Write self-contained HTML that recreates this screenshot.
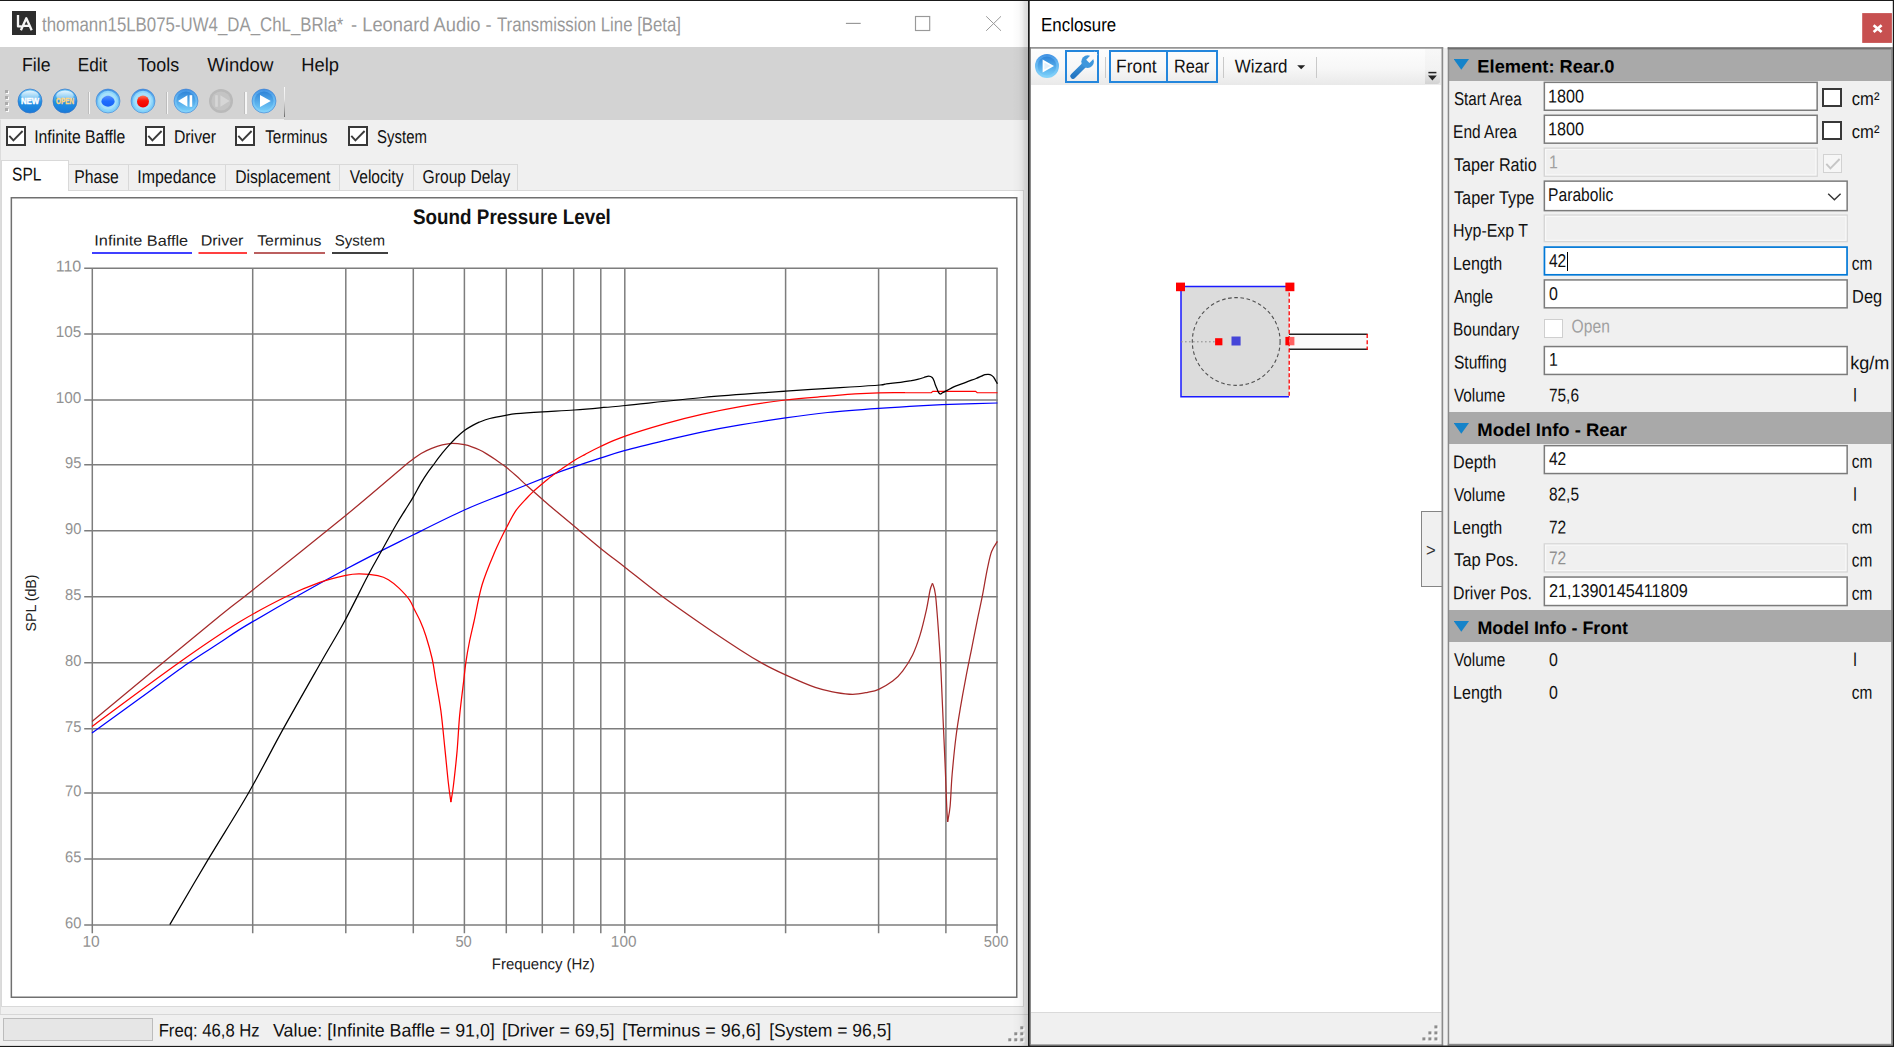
<!DOCTYPE html>
<html><head><meta charset="utf-8"><title>Leonard Audio - Transmission Line</title>
<style>
*{box-sizing:border-box;margin:0;padding:0}
html,body{width:1894px;height:1047px;overflow:hidden;background:#f0f0f0;font-family:"Liberation Sans",sans-serif}
.a{position:absolute}
.t{position:absolute;left:0;top:0;white-space:nowrap;line-height:1;transform-origin:0 0;font-family:"Liberation Sans",sans-serif}
.cb{position:absolute;width:19.6px;height:19.6px;border:2px solid #383838;background:#fff}
.tab{position:absolute;top:164px;height:26.4px;background:#f0f0f0;border:1px solid #d9d9d9;border-bottom:none}
.inp{position:absolute;background:#fff;border:1.5px solid #6a6a6a}
.dis{position:absolute;background:#f0f0f0;border:1.5px solid #d9d9d9;box-shadow:inset 0 0 0 1.2px #f7f7f7}
.hdr{position:absolute;left:1449px;width:443px;background:#a9a9a9}
</style></head><body>
<!-- ============ MAIN WINDOW ============ -->
<div class="a" style="left:0;top:0;width:1028px;height:47px;background:#fff"></div>
<div class="a" style="left:0;top:47px;width:1028px;height:72.8px;background:#d3d3d3"></div>
<div class="a" style="left:0;top:118.5px;width:283.6px;height:1.4px;background:#efefef;border-radius:0 0 0 3px"></div>
<!-- tab page -->
<div class="a" style="left:1px;top:190px;width:1023px;height:816.5px;background:#fff;border:1px solid #d9d9d9"></div>
<div class="tab" style="left:68px;width:61px"></div>
<div class="tab" style="left:128px;width:98px"></div>
<div class="tab" style="left:225px;width:115px"></div>
<div class="tab" style="left:339px;width:75px"></div>
<div class="tab" style="left:413px;width:105px"></div>
<div class="a" style="left:1px;top:160px;width:68px;height:31.4px;background:#fff;border:1px solid #d9d9d9;border-bottom:none"></div>
<div class="a" style="left:0;top:120px;width:1px;height:894px;background:#dcdcdc"></div>
<!-- chart panel -->
<svg class="a" style="left:0;top:190px" width="1028" height="820" viewBox="0 190 1028 820"><rect x="11.35" y="197.75" width="1005.4" height="799.5" fill="#fff" stroke="#707070" stroke-width="1.5"/></svg>
<svg style="position:absolute;left:0;top:0" width="1028" height="1010" viewBox="0 0 1028 1010"><g stroke="#7d7d7d" stroke-width="1.5" fill="none"><line x1="92.30" y1="268.2" x2="92.30" y2="933.2"/><line x1="252.70" y1="268.2" x2="252.70" y2="933.2"/><line x1="345.80" y1="268.2" x2="345.80" y2="933.2"/><line x1="413.30" y1="268.2" x2="413.30" y2="933.2"/><line x1="464.40" y1="268.2" x2="464.40" y2="933.2"/><line x1="506.30" y1="268.2" x2="506.30" y2="933.2"/><line x1="542.30" y1="268.2" x2="542.30" y2="933.2"/><line x1="573.70" y1="268.2" x2="573.70" y2="933.2"/><line x1="600.80" y1="268.2" x2="600.80" y2="933.2"/><line x1="624.80" y1="268.2" x2="624.80" y2="933.2"/><line x1="785.60" y1="268.2" x2="785.60" y2="933.2"/><line x1="878.60" y1="268.2" x2="878.60" y2="933.2"/><line x1="945.90" y1="268.2" x2="945.90" y2="933.2"/><line x1="997.00" y1="268.2" x2="997.00" y2="933.2"/><line x1="84.2" y1="268.20" x2="997.7" y2="268.20"/><line x1="84.2" y1="333.90" x2="997.7" y2="333.90"/><line x1="84.2" y1="399.90" x2="997.7" y2="399.90"/><line x1="84.2" y1="464.80" x2="997.7" y2="464.80"/><line x1="84.2" y1="530.70" x2="997.7" y2="530.70"/><line x1="84.2" y1="596.80" x2="997.7" y2="596.80"/><line x1="84.2" y1="662.70" x2="997.7" y2="662.70"/><line x1="84.2" y1="728.80" x2="997.7" y2="728.80"/><line x1="84.2" y1="793.00" x2="997.7" y2="793.00"/><line x1="84.2" y1="859.10" x2="997.7" y2="859.10"/><line x1="84.2" y1="925.00" x2="997.7" y2="925.00"/></g><path d="M92.0 732.9 C100.0 727.1 124.1 709.8 140.0 698.3 C155.9 686.8 174.1 673.1 187.4 663.8 C200.7 654.5 209.2 649.6 220.0 642.6 C230.8 635.6 231.4 634.1 252.3 621.9 C273.2 609.7 318.9 583.8 345.7 569.3 C372.5 554.8 393.6 544.7 413.4 534.8 C433.2 524.9 449.0 516.9 464.4 510.0 C479.8 503.1 490.8 499.2 505.6 493.3 C520.4 487.4 541.6 478.8 553.0 474.4 C564.4 470.0 566.0 469.6 574.0 466.9 C582.0 464.1 592.5 460.6 601.0 457.9 C609.5 455.1 614.5 453.3 625.2 450.4 C635.9 447.5 652.5 443.5 665.4 440.4 C678.3 437.3 690.3 434.5 702.8 431.9 C715.3 429.3 726.5 427.2 740.3 424.9 C754.1 422.6 770.9 420.0 785.5 417.9 C800.1 415.8 812.2 414.1 827.7 412.5 C843.2 410.9 866.2 409.2 878.7 408.3 C891.2 407.4 894.8 407.4 903.0 406.9 C911.2 406.4 918.8 405.9 928.0 405.4 C937.2 404.9 946.4 404.5 958.0 404.1 C969.6 403.7 990.9 403.2 997.5 403.0" stroke="#0000ff" stroke-width="1.25" fill="none" stroke-linejoin="round"/><path d="M92.0 726.4 C106.7 715.7 155.3 679.4 179.9 662.0 C204.5 644.6 221.9 632.8 239.8 621.8 C257.7 610.8 274.0 602.6 287.3 596.0 C300.6 589.4 310.1 585.8 319.8 582.3 C329.5 578.8 339.1 576.7 345.7 575.3 C352.3 573.9 354.3 573.7 359.7 573.8 C365.1 573.9 373.0 574.7 377.8 575.7 C382.6 576.7 384.9 577.6 388.4 579.7 C391.9 581.8 395.5 584.8 399.0 588.1 C402.5 591.5 406.9 596.1 409.5 599.8 C412.1 603.5 413.0 606.8 414.8 610.3 C416.6 613.8 418.2 616.5 420.1 620.8 C422.0 625.1 423.9 629.7 425.9 636.0 C427.9 642.3 430.4 651.0 432.1 658.5 C433.8 666.0 434.4 672.2 435.9 680.9 C437.4 689.6 439.4 700.1 440.9 710.9 C442.3 721.7 443.4 733.8 444.6 745.9 C445.9 758.0 447.3 773.9 448.4 783.3 C449.4 792.7 450.5 799.0 450.9 802.1" stroke="#ff0000" stroke-width="1.25" fill="none" stroke-linejoin="round"/><path d="M450.9 802.1 C451.3 799.4 452.4 794.3 453.4 785.8 C454.4 777.3 456.1 762.5 457.1 750.9 C458.1 739.2 458.6 727.1 459.6 715.9 C460.7 704.6 462.3 692.3 463.4 683.4 C464.4 674.5 464.9 669.3 465.9 662.2 C466.9 655.1 468.2 647.9 469.6 641.0 C471.0 634.1 472.0 630.4 474.1 621.0 C476.2 611.6 478.7 596.2 482.1 584.8 C485.5 573.3 490.5 561.9 494.6 552.3 C498.7 542.7 503.0 534.3 506.6 527.3 C510.2 520.3 512.9 515.0 516.2 510.2 C519.6 505.4 523.7 501.4 526.7 498.2 C529.7 495.0 531.5 493.3 534.1 490.8 C536.8 488.3 539.4 486.0 542.6 483.4 C545.8 480.8 549.6 477.6 553.1 475.0 C556.6 472.4 560.2 470.0 563.7 467.6 C567.2 465.2 570.7 462.7 574.2 460.5 C577.7 458.3 580.3 457.0 584.8 454.6 C589.3 452.2 594.3 449.3 601.0 446.2 C607.7 443.1 614.5 439.9 625.2 436.2 C635.9 432.4 652.5 427.4 665.4 423.7 C678.3 420.0 690.3 417.0 702.8 414.2 C715.3 411.4 726.5 409.1 740.3 406.7 C754.1 404.3 770.9 401.8 785.5 400.0 C800.1 398.2 816.1 397.2 827.7 396.2 C839.3 395.2 846.5 394.5 855.0 393.9 C863.5 393.3 870.4 393.0 878.7 392.8 C887.0 392.6 900.6 392.7 905.0 392.7" stroke="#ff0000" stroke-width="1.25" fill="none" stroke-linejoin="round"/><path d="M905.0 392.7 L931.3 392.7 L932.8 391.3 L975.6 391.3 L977.2 392.7 L997.5 392.7" stroke="#ff0000" stroke-width="1.15" fill="none"/><path d="M92.0 721.4 C112.3 704.7 186.8 642.9 213.6 621.0 C240.4 599.1 230.8 607.6 252.8 590.0 C274.8 572.4 321.2 535.5 345.7 515.5 C370.2 495.4 388.8 479.1 400.0 469.7 C411.2 460.3 409.7 461.8 413.2 459.1 C416.7 456.4 418.0 455.3 421.1 453.5 C424.2 451.7 428.2 449.8 431.7 448.4 C435.2 447.0 438.7 445.8 442.2 444.9 C445.7 444.0 449.1 443.3 452.8 443.3 C456.5 443.3 461.2 444.1 464.4 444.7 C467.6 445.3 469.3 445.9 471.8 446.8 C474.3 447.7 476.7 448.6 479.2 449.8 C481.7 451.0 484.0 452.3 486.6 453.9 C489.2 455.5 491.8 457.1 495.0 459.3 C498.2 461.5 502.1 464.1 505.6 466.8 C509.1 469.6 512.7 472.7 516.2 475.8 C519.7 478.9 522.3 481.6 526.7 485.5 C531.1 489.4 538.2 495.6 542.6 499.5 C547.0 503.4 547.8 504.2 553.0 508.6 C558.2 513.0 566.0 519.4 574.0 526.1 C582.0 532.8 592.5 541.8 601.0 548.7 C609.5 555.6 615.3 559.7 625.2 567.4 C635.1 575.1 647.5 585.3 660.4 594.9 C673.3 604.5 689.5 615.7 702.8 624.9 C716.1 634.1 730.3 643.4 740.3 649.9 C750.3 656.4 755.3 659.4 762.8 663.6 C770.3 667.8 776.8 670.9 785.5 674.9 C794.2 678.9 806.9 684.5 815.2 687.4 C823.5 690.3 829.0 691.1 835.2 692.3 C841.5 693.4 847.3 694.3 852.7 694.3 C858.1 694.3 863.4 693.1 867.7 692.3 C872.0 691.5 874.5 691.3 878.7 689.4 C882.9 687.5 888.7 684.1 892.7 681.1 C896.7 678.1 899.3 675.5 902.6 671.1 C905.9 666.7 909.7 660.9 912.6 654.9 C915.5 648.9 917.8 642.4 920.1 634.9 C922.4 627.4 924.7 617.4 926.4 609.9 C928.1 602.4 929.1 594.4 930.1 590.0 C931.1 585.6 932.1 584.4 932.5 583.3" stroke="#a52a2a" stroke-width="1.25" fill="none" stroke-linejoin="round"/><path d="M932.5 583.3 C933.0 585.2 934.5 586.5 935.5 595.0 C936.5 603.5 937.8 621.7 938.7 634.5 C939.6 647.3 940.3 657.9 941.0 671.7 C941.7 685.5 942.3 701.3 943.0 717.5 C943.7 733.7 944.7 754.2 945.3 769.0 C945.9 783.8 946.3 797.4 946.7 806.2 C947.1 815.0 947.5 819.4 947.6 822.0" stroke="#a52a2a" stroke-width="1.25" fill="none" stroke-linejoin="round"/><path d="M947.6 822.0 C948.0 819.4 949.4 814.1 950.1 806.2 C950.9 798.3 951.1 786.2 952.1 774.8 C953.1 763.3 954.5 748.5 955.9 737.5 C957.2 726.5 958.5 718.9 960.2 708.9 C961.9 698.9 964.0 687.4 965.9 677.4 C967.8 667.4 969.7 658.3 971.6 648.8 C973.5 639.3 975.5 628.9 977.3 620.2 C979.1 611.5 980.5 605.3 982.2 596.7 C983.9 588.1 985.8 576.1 987.4 568.6 C989.0 561.1 989.9 556.0 991.6 551.5 C993.3 547.0 996.4 543.1 997.4 541.4" stroke="#a52a2a" stroke-width="1.25" fill="none" stroke-linejoin="round"/><path d="M169.8 924.6 C176.2 913.6 195.4 880.8 208.5 858.9 C221.6 837.0 236.0 814.8 248.5 793.0 C261.0 771.2 271.4 750.2 283.5 728.4 C295.6 706.6 310.8 680.1 321.0 662.2 C331.2 644.3 336.8 635.6 344.7 621.0 C352.6 606.4 362.1 586.7 368.4 574.8 C374.6 562.9 377.6 558.1 382.2 549.8 C386.8 541.5 392.1 531.7 396.0 525.0 C399.9 518.3 402.4 514.5 405.3 509.8 C408.2 505.2 410.6 501.6 413.2 497.1 C415.8 492.6 418.7 486.9 421.1 482.9 C423.5 478.9 425.2 476.2 427.5 472.9 C429.8 469.6 432.4 466.3 434.8 463.0 C437.2 459.7 439.7 456.3 442.2 453.2 C444.7 450.1 447.1 447.3 449.6 444.6 C452.1 441.9 454.5 439.3 457.0 437.0 C459.5 434.7 461.9 432.5 464.4 430.6 C466.9 428.8 469.3 427.3 471.8 425.9 C474.3 424.5 476.2 423.4 479.2 422.2 C482.2 421.0 485.4 419.6 489.8 418.5 C494.2 417.4 501.2 416.1 505.6 415.3 C510.0 414.5 510.0 414.3 516.2 413.7 C522.4 413.1 532.9 412.4 542.6 411.8 C552.3 411.2 564.6 410.7 574.2 410.0 C583.8 409.3 591.5 408.6 600.0 407.8 C608.5 407.1 608.1 407.2 625.2 405.5 C642.3 403.8 676.1 399.9 702.8 397.5 C729.5 395.1 766.0 392.6 785.5 391.2 C805.0 389.8 809.2 389.6 820.0 388.9 C830.8 388.2 840.0 387.6 850.0 387.0 C860.0 386.4 874.0 385.5 880.0 385.0 C886.0 384.5 882.8 384.3 886.2 383.9 C889.6 383.4 896.4 382.9 900.6 382.3 C904.8 381.8 908.6 381.1 911.6 380.6 C914.6 380.1 916.4 379.6 918.4 379.1 C920.4 378.6 922.2 378.0 923.9 377.5 C925.6 377.0 927.3 376.1 928.7 376.1 C930.1 376.1 931.3 376.6 932.2 377.5 C933.1 378.4 933.7 380.1 934.2 381.3 C934.7 382.6 934.9 383.8 935.4 385.0 C935.9 386.2 936.5 387.6 937.0 388.8 C937.5 390.0 937.9 391.4 938.5 392.3 C939.1 393.2 939.7 393.9 940.4 394.0 C941.1 394.1 941.5 393.3 942.5 392.8 C943.5 392.3 944.7 391.7 946.2 390.9 C947.7 390.1 949.9 388.9 951.4 388.1 C952.9 387.3 953.1 387.1 955.5 386.1 C957.9 385.1 962.4 383.6 965.8 382.3 C969.2 381.0 973.5 379.5 976.1 378.5 C978.7 377.5 980.1 376.7 981.6 376.1 C983.1 375.5 983.9 375.0 985.0 374.7 C986.1 374.4 987.3 374.2 988.4 374.3 C989.5 374.4 990.5 374.7 991.4 375.2 C992.3 375.7 993.0 376.4 993.6 377.2 C994.2 378.0 994.7 379.0 995.2 379.8 C995.7 380.6 996.0 381.4 996.4 382.0 C996.8 382.6 997.3 383.4 997.5 383.7" stroke="#000" stroke-width="1.25" fill="none" stroke-linejoin="round"/><line x1="92" y1="253" x2="192" y2="253" stroke="#0000ff" stroke-width="1.6"/><line x1="198.5" y1="253" x2="247" y2="253" stroke="#ff0000" stroke-width="1.6"/><line x1="254" y1="253" x2="325" y2="253" stroke="#a52a2a" stroke-width="1.6"/><line x1="332" y1="253" x2="388" y2="253" stroke="#000" stroke-width="1.6"/></svg>
<!-- status bar -->
<div class="a" style="left:0;top:1013.5px;width:1028px;height:1px;background:#d7d7d7"></div>
<div class="a" style="left:3px;top:1017.5px;width:150px;height:23.5px;background:#e6e6e6;border:1px solid #bcbcbc"></div>
<!-- checkboxes -->
<div class="cb" style="left:6.0px;top:126.4px"></div><svg class="a" style="left:6.0px;top:126.4px" width="20" height="20"><path d="M3.3 9.8 L7.4 14.3 L16.6 5" stroke="#3c3c3c" stroke-width="1.9" fill="none"/></svg><div class="cb" style="left:145.4px;top:126.4px"></div><svg class="a" style="left:145.4px;top:126.4px" width="20" height="20"><path d="M3.3 9.8 L7.4 14.3 L16.6 5" stroke="#3c3c3c" stroke-width="1.9" fill="none"/></svg><div class="cb" style="left:235.3px;top:126.4px"></div><svg class="a" style="left:235.3px;top:126.4px" width="20" height="20"><path d="M3.3 9.8 L7.4 14.3 L16.6 5" stroke="#3c3c3c" stroke-width="1.9" fill="none"/></svg><div class="cb" style="left:348.2px;top:126.4px"></div><svg class="a" style="left:348.2px;top:126.4px" width="20" height="20"><path d="M3.3 9.8 L7.4 14.3 L16.6 5" stroke="#3c3c3c" stroke-width="1.9" fill="none"/></svg>
<!-- icons -->
<svg width="0" height="0" style="position:absolute"><defs>
<radialGradient id="gb" cx="50%" cy="30%" r="75%"><stop offset="0" stop-color="#9ad7fb"/><stop offset="0.55" stop-color="#3fa2ea"/><stop offset="1" stop-color="#1b78d0"/></radialGradient>
<linearGradient id="gball" x1="0" y1="0" x2="0" y2="1"><stop offset="0" stop-color="#6cc4f4"/><stop offset="0.46" stop-color="#3aa0ea"/><stop offset="0.54" stop-color="#2090e4"/><stop offset="1" stop-color="#1a7ad8"/></linearGradient><linearGradient id="ggloss" x1="0" y1="0" x2="0" y2="1"><stop offset="0" stop-color="#ffffff" stop-opacity="0.85"/><stop offset="1" stop-color="#bfeafb" stop-opacity="0.35"/></linearGradient>
<radialGradient id="gg" cx="50%" cy="30%" r="75%"><stop offset="0" stop-color="#d9d9d9"/><stop offset="1" stop-color="#b4b4b4"/></radialGradient>
<linearGradient id="gr" x1="0" y1="0" x2="0" y2="1"><stop offset="0" stop-color="#ff7a5a"/><stop offset="0.45" stop-color="#fa1408"/><stop offset="1" stop-color="#f00000"/></linearGradient>
<linearGradient id="gbl" x1="0" y1="0" x2="0" y2="1"><stop offset="0" stop-color="#5a90ff"/><stop offset="0.5" stop-color="#1e6cff"/><stop offset="1" stop-color="#1a64f4"/></linearGradient>
<linearGradient id="gp2" x1="0" y1="0" x2="0" y2="1"><stop offset="0" stop-color="#2f84d8"/><stop offset="1" stop-color="#74cbf8"/></linearGradient>
<linearGradient id="gring" x1="0" y1="0" x2="0" y2="1"><stop offset="0" stop-color="#3f8fe2"/><stop offset="0.35" stop-color="#62b4f0"/><stop offset="1" stop-color="#86d4fa"/></linearGradient>
</defs></svg><div class="a" style="left:6px;top:91.0px;width:3px;height:3px;background:#fafafa"></div><div class="a" style="left:5px;top:90.0px;width:3px;height:3px;background:#ababab"></div><div class="a" style="left:6px;top:97.0px;width:3px;height:3px;background:#fafafa"></div><div class="a" style="left:5px;top:96.0px;width:3px;height:3px;background:#ababab"></div><div class="a" style="left:6px;top:103.0px;width:3px;height:3px;background:#fafafa"></div><div class="a" style="left:5px;top:102.0px;width:3px;height:3px;background:#ababab"></div><div class="a" style="left:6px;top:109.0px;width:3px;height:3px;background:#fafafa"></div><div class="a" style="left:5px;top:108.0px;width:3px;height:3px;background:#ababab"></div><svg class="a" style="left:17.1px;top:87.9px" width="26" height="26" viewBox="-13 -13 26 26"><circle r="12" fill="url(#gball)" stroke="#2f74c8" stroke-width="0.7"/><ellipse cx="0" cy="-5.2" rx="8.8" ry="5.4" fill="url(#ggloss)"/><text x="0" y="3.3" font-family="Liberation Sans" font-weight="bold" font-size="8.4" fill="#fff" stroke="#fff" stroke-width="0.45" text-anchor="middle" textLength="18" lengthAdjust="spacingAndGlyphs">NEW</text></svg><svg class="a" style="left:51.5px;top:87.9px" width="26" height="26" viewBox="-13 -13 26 26"><circle r="12" fill="url(#gball)" stroke="#2f74c8" stroke-width="0.7"/><ellipse cx="0" cy="-5.2" rx="8.8" ry="5.4" fill="url(#ggloss)"/><text x="0" y="3.3" font-family="Liberation Sans" font-weight="bold" font-size="8.2" fill="#ffd480" stroke="#ffd480" stroke-width="0.4" text-anchor="middle" textLength="18" lengthAdjust="spacingAndGlyphs">OPEN</text></svg><div class="a" style="left:87.7px;top:92px;width:1px;height:21.5px;background:#bdbdbd"></div><div class="a" style="left:88.7px;top:92px;width:1.5px;height:21.5px;background:#f6f6f6"></div><div class="a" style="left:165.8px;top:92px;width:1px;height:21.5px;background:#bdbdbd"></div><div class="a" style="left:166.8px;top:92px;width:1.5px;height:21.5px;background:#f6f6f6"></div><div class="a" style="left:244.0px;top:92px;width:1px;height:21.5px;background:#bdbdbd"></div><div class="a" style="left:245.0px;top:92px;width:1.5px;height:21.5px;background:#f6f6f6"></div><svg class="a" style="left:95.0px;top:87.9px" width="26" height="26" viewBox="-13 -13 26 26"><circle r="12" fill="url(#gring)" stroke="#3a80d4" stroke-width="0.6"/><circle r="10.2" fill="#8fd6fa"/><circle r="8.6" fill="#a6e0fb"/><path d="M-6.6 0.6 C-6.6 -2.6 -3 -5.2 0 -5.2 C3 -5.2 6.6 -2.6 6.6 0.6 C6.6 3.4 2.6 5.8 0 5.8 C-2.6 5.8 -6.6 3.4 -6.6 0.6 Z" fill="url(#gbl)"/></svg><svg class="a" style="left:129.6px;top:87.9px" width="26" height="26" viewBox="-13 -13 26 26"><circle r="12" fill="url(#gring)" stroke="#3a80d4" stroke-width="0.6"/><circle r="10.2" fill="#8fd6fa"/><circle r="8.6" fill="#a6e0fb"/><circle cx="0" cy="0.4" r="6" fill="url(#gr)"/></svg><svg class="a" style="left:173.1px;top:87.9px" width="26" height="26" viewBox="-13 -13 26 26"><circle r="12" fill="url(#gring)" stroke="#3a80d4" stroke-width="0.6"/><circle r="9.6" fill="url(#gp2)"/><path d="M1.4 -5.8 L1.4 5.8 L-8 0 Z" fill="#fff"/><rect x="3.6" y="-5.8" width="2.6" height="11.6" fill="#fff"/></svg><svg class="a" style="left:207.5px;top:87.9px" width="26" height="26" viewBox="-13 -13 26 26"><circle r="12" fill="#b9b9b9"/><circle r="9.6" fill="#c4c4c4"/><path d="M-0.6 -5.8 L-0.6 5.8 L8.6 0 Z" fill="#d6d6d6"/><rect x="-5.8" y="-5.8" width="2.6" height="11.6" fill="#d6d6d6"/></svg><svg class="a" style="left:251.0px;top:87.9px" width="26" height="26" viewBox="-13 -13 26 26"><circle r="12" fill="url(#gring)" stroke="#3a80d4" stroke-width="0.6"/><circle r="9.6" fill="url(#gp2)"/><path d="M-4 -5.9 L-4 5.9 L6.8 0 Z" fill="#fff"/></svg><div class="a" style="left:283.6px;top:87.4px;width:1.3px;height:30px;background:linear-gradient(180deg,#f8f8f8 0%,#eaeaea 40%,#9a9a9a 80%,#6a6a6a 100%)"></div><div class="a" style="left:12px;top:11px;width:24px;height:24px;background:#2d2d2d"></div><svg class="a" style="left:12px;top:11px" width="24" height="24"><path d="M6 4 V15.4 H9.6 M8.9 19.2 L14.3 7.2 L19.7 19.2 M11 14.8 H17.6" stroke="#f4f4f4" stroke-width="2.3" fill="none" stroke-linejoin="round"/></svg><svg class="a" style="left:840px;top:10px" width="170" height="28"><g stroke="#999" stroke-width="1.15" fill="none"><path d="M5.9 13.4 H20.7"/><rect x="75.5" y="6.5" width="14.2" height="14"/><path d="M146.2 6.3 L161 20.8 M161 6.3 L146.2 20.8" stroke-width="1"/></g></svg>
<!-- main window right edge shadow -->
<div class="a" style="left:1012px;top:1px;width:16px;height:1045px;background:linear-gradient(90deg,rgba(0,0,0,0),rgba(0,0,0,0.02) 40%,rgba(0,0,0,0.05) 62%,rgba(0,0,0,0.11) 78%,rgba(0,0,0,0.15))"></div>
<!-- ============ ENCLOSURE WINDOW ============ -->
<div class="a" style="left:1028px;top:0;width:866px;height:1047px;background:#fff"></div>
<!-- left canvas panel -->

<div class="a" style="left:1031.1px;top:48.4px;width:410.4px;height:37px;background:linear-gradient(180deg,#fdfdfd 0%,#f7f7f7 55%,#e9e9e9 100%)"></div>
<div class="a" style="left:1031.1px;top:1012px;width:410.4px;height:32.3px;background:#f0f0f0;border-top:1.2px solid #dadada"></div>
<!-- expand button -->
<div class="a" style="left:1443px;top:48px;width:5.5px;height:997px;background:#f0f0f0"></div>
<div class="a" style="left:1420.6px;top:510.8px;width:22px;height:76px;background:#f0f0f0;border:1.6px solid #858585;border-right:none"></div>
<!-- right props panel -->
<div class="a" style="left:1448px;top:48px;width:445px;height:998px;background:#f0f0f0"></div>
<div class="hdr" style="top:48.5px;height:32.1px"></div>
<div class="hdr" style="top:412px;height:31.5px"></div>
<div class="hdr" style="top:610px;height:31.5px"></div>
<svg class="a" style="left:0;top:0" width="1894" height="1047" viewBox="0 0 1894 1047"><rect x="1544.35" y="82.35" width="272.80" height="27.90" fill="#fff" stroke="#7b7b7b" stroke-width="1.5"/><rect x="1544.35" y="115.28" width="272.80" height="27.90" fill="#fff" stroke="#7b7b7b" stroke-width="1.5"/><rect x="1544.30" y="148.16" width="272.90" height="28.00" fill="#f0f0f0" stroke="#d6d6d6" stroke-width="1.4"/><rect x="1545.60" y="149.46" width="270.30" height="25.40" fill="none" stroke="#f8f8f8" stroke-width="1.2"/><rect x="1544.35" y="181.14" width="302.80" height="29.50" fill="#fff" stroke="#7b7b7b" stroke-width="1.5"/><rect x="1544.30" y="215.10" width="302.90" height="26.50" fill="#f0f0f0" stroke="#d6d6d6" stroke-width="1.4"/><rect x="1545.60" y="216.40" width="300.30" height="23.90" fill="none" stroke="#f8f8f8" stroke-width="1.2"/><rect x="1544.45" y="247.10" width="302.60" height="27.70" fill="#fff" stroke="#0078d7" stroke-width="1.7"/><rect x="1544.35" y="279.93" width="302.80" height="27.90" fill="#fff" stroke="#7b7b7b" stroke-width="1.5"/><rect x="1544.35" y="346.55" width="302.80" height="27.90" fill="#fff" stroke="#7b7b7b" stroke-width="1.5"/><rect x="1544.35" y="445.65" width="302.80" height="27.90" fill="#fff" stroke="#7b7b7b" stroke-width="1.5"/><rect x="1544.30" y="543.90" width="302.90" height="28.00" fill="#f0f0f0" stroke="#d6d6d6" stroke-width="1.4"/><rect x="1545.60" y="545.20" width="300.30" height="25.40" fill="none" stroke="#f8f8f8" stroke-width="1.2"/><rect x="1544.35" y="577.05" width="302.80" height="28.50" fill="#fff" stroke="#7b7b7b" stroke-width="1.5"/></svg><div class="cb" style="left:1822.4px;top:87.6px"></div><div class="cb" style="left:1822.4px;top:120.6px"></div><div class="a" style="left:1822.6px;top:153.6px;width:19.4px;height:19.4px;background:#f6f6f6;border:1.4px solid #d2d2d2"></div><svg class="a" style="left:1822.6px;top:153.6px" width="20" height="20"><path d="M3.3 9.8 L7.4 14.3 L16.6 5" stroke="#c6c6c6" stroke-width="1.9" fill="none"/></svg><div class="a" style="left:1544px;top:319.2px;width:19px;height:18.4px;background:#fff;border:1.3px solid #cfcfcf"></div><svg class="a" style="left:1826px;top:191px" width="18" height="12"><path d="M2.2 2.8 L8.4 8.8 L14.6 2.8" stroke="#333" stroke-width="1.4" fill="none"/></svg><div class="a" style="left:1566.6px;top:252px;width:1.3px;height:19px;background:#000"></div><svg class="a" style="left:1454px;top:59.4px" width="17" height="13"><path d="M-0.4 0 H15 L7.3 10.8 Z" fill="#1583c9"/></svg><svg class="a" style="left:1454px;top:422.8px" width="17" height="13"><path d="M-0.4 0 H15 L7.3 10.8 Z" fill="#1583c9"/></svg><svg class="a" style="left:1454px;top:620.8px" width="17" height="13"><path d="M-0.4 0 H15 L7.3 10.8 Z" fill="#1583c9"/></svg>
<svg class="a" style="left:1034.0px;top:53.3px" width="26" height="26" viewBox="-13 -13 26 26"><circle r="12" fill="url(#gring)"/><circle r="9.4" fill="url(#gp2)"/><path d="M-4.4 -6.6 L-4.4 6.6 L7 0 Z" fill="#fff"/><path d="M-2.6 -3.6 L-2.6 3.6 L3.6 0 Z" fill="#cfe6fa" opacity="0.6"/></svg><div class="a" style="left:1065px;top:50.4px;width:34.2px;height:32.2px;border:2px solid #2486dc"></div><svg class="a" style="left:1065px;top:50px" width="36" height="34" viewBox="1065 50 36 34">
<defs><linearGradient id="gw" x1="0" y1="0" x2="0" y2="1"><stop offset="0" stop-color="#5aaee8"/><stop offset="1" stop-color="#1a6ab8"/></linearGradient></defs>
<path d="M1073 76.2 L1085.4 63.8" stroke="url(#gw)" stroke-width="5.2" stroke-linecap="round"/>
<path d="M1073 76.2 L1085.4 63.8" stroke="#2a80cc" stroke-width="5.2" stroke-linecap="round" opacity="0.55"/>
<circle cx="1087.6" cy="61.6" r="6.3" fill="#3f97dc"/>
<path d="M1087.8 61.4 L1096 53.2" stroke="#f8f8f8" stroke-width="4.6"/>
</svg><div class="a" style="left:1104.5px;top:57px;width:1.3px;height:21px;background:#c9c9c9"></div><div class="a" style="left:1223.0px;top:57px;width:1.3px;height:21px;background:#c9c9c9"></div><div class="a" style="left:1315.5px;top:57px;width:1.3px;height:21px;background:#c9c9c9"></div><div class="a" style="left:1108.7px;top:50.4px;width:59px;height:32.2px;border:2px solid #2486dc"></div><div class="a" style="left:1165.8px;top:50.4px;width:52px;height:32.2px;border:2px solid #2486dc"></div><svg class="a" style="left:1296px;top:63px" width="12" height="8"><path d="M1.2 2.2 H9.2 L5.2 6.2 Z" fill="#222"/></svg><div class="a" style="left:1425px;top:49px;width:16px;height:36px;background:linear-gradient(180deg,rgba(245,245,245,0.6),rgba(236,236,236,0.7))"></div><div class="a" style="left:1425px;top:70px;width:15.4px;height:14px;background:linear-gradient(180deg,#efefef,#d2d2d2);border-radius:0 0 3px 0"></div><svg class="a" style="left:1425px;top:70px" width="15" height="14"><path d="M3.4 2.6 H11.4" stroke="#222" stroke-width="1.5"/><path d="M3 5.6 H11.8 L7.4 10.4 Z" fill="#222"/></svg><svg class="a" style="left:0;top:0" width="1894" height="1047"><rect x="1021.4" y="1039.4" width="3" height="3" fill="#ffffff"/><rect x="1020.3" y="1038.3" width="3" height="3" fill="#8c8c8c"/><rect x="1015.4" y="1039.4" width="3" height="3" fill="#ffffff"/><rect x="1014.3" y="1038.3" width="3" height="3" fill="#8c8c8c"/><rect x="1009.4" y="1039.4" width="3" height="3" fill="#ffffff"/><rect x="1008.3" y="1038.3" width="3" height="3" fill="#8c8c8c"/><rect x="1021.4" y="1033.4" width="3" height="3" fill="#ffffff"/><rect x="1020.3" y="1032.3" width="3" height="3" fill="#8c8c8c"/><rect x="1015.4" y="1033.4" width="3" height="3" fill="#ffffff"/><rect x="1014.3" y="1032.3" width="3" height="3" fill="#8c8c8c"/><rect x="1021.4" y="1027.4" width="3" height="3" fill="#ffffff"/><rect x="1020.3" y="1026.3" width="3" height="3" fill="#8c8c8c"/></svg><svg class="a" style="left:0;top:0" width="1894" height="1047"><rect x="1435.5" y="1038.5" width="3" height="3" fill="#ffffff"/><rect x="1434.4" y="1037.4" width="3" height="3" fill="#8c8c8c"/><rect x="1429.5" y="1038.5" width="3" height="3" fill="#ffffff"/><rect x="1428.4" y="1037.4" width="3" height="3" fill="#8c8c8c"/><rect x="1423.5" y="1038.5" width="3" height="3" fill="#ffffff"/><rect x="1422.4" y="1037.4" width="3" height="3" fill="#8c8c8c"/><rect x="1435.5" y="1032.5" width="3" height="3" fill="#ffffff"/><rect x="1434.4" y="1031.4" width="3" height="3" fill="#8c8c8c"/><rect x="1429.5" y="1032.5" width="3" height="3" fill="#ffffff"/><rect x="1428.4" y="1031.4" width="3" height="3" fill="#8c8c8c"/><rect x="1435.5" y="1026.5" width="3" height="3" fill="#ffffff"/><rect x="1434.4" y="1025.4" width="3" height="3" fill="#8c8c8c"/></svg><svg class="a" style="left:1160px;top:270px" width="240" height="140" viewBox="1160 270 240 140">
<rect x="1181" y="286.4" width="108" height="110.4" fill="#dcdcdc"/>
<path d="M1289 286.4 H1181 V396.8 H1289" stroke="#1a1aff" stroke-width="1.5" fill="none"/>
<rect x="1289" y="334.2" width="78.4" height="15.2" fill="#fafafa"/>
<path d="M1289 334.2 H1367.6 M1289 349.3 H1367.6" stroke="#222" stroke-width="1.5"/>
<path d="M1289.2 286.4 V396.8" stroke="#ff0000" stroke-width="1.3" stroke-dasharray="4 2.2"/>
<path d="M1367.2 334 V350" stroke="#ff0000" stroke-width="1.3" stroke-dasharray="4 2.2"/>
<circle cx="1236.2" cy="341.5" r="43.9" fill="none" stroke="#505050" stroke-width="1.1" stroke-dasharray="3.6 2.6"/>
<path d="M1181 341.8 H1215" stroke="#8a8a8a" stroke-width="1" stroke-dasharray="1.6 2.4"/>
<rect x="1176" y="282.6" width="9" height="8.6" fill="#ff0000"/>
<rect x="1285.4" y="282.6" width="9" height="8.6" fill="#ff0000"/>
<rect x="1285.4" y="336.9" width="4" height="8.4" fill="#ff0000"/><rect x="1289.4" y="336.9" width="5" height="8.4" fill="#ff6262"/>
<rect x="1215.1" y="338.2" width="7.3" height="7.1" fill="#ff0000"/>
<rect x="1231.5" y="336.5" width="9.1" height="9" fill="#4545d8"/>
</svg>
<!-- close button -->
<svg class="a" style="left:1860px;top:10px" width="34" height="36" viewBox="1860 10 34 36"><rect x="1862.2" y="13.1" width="29.7" height="29.8" fill="#c75050"/><path d="M1873.6 25.2 L1881.6 32 M1881.6 25.2 L1873.6 32" stroke="#fff" stroke-width="2.7"/></svg>
<!-- global borders -->
<svg class="a" style="left:0;top:0" width="1894" height="1047" viewBox="0 0 1894 1047">
<g fill="#8a8a8a">
<rect x="1029.7" y="47.2" width="1.3" height="998.3"/><rect x="1029.7" y="47.2" width="413.5" height="1.4" fill="#7c7c7c"/><rect x="1441.5" y="47.2" width="1.7" height="998.3"/><rect x="1029.7" y="1044.3" width="413.5" height="1.2"/>
<rect x="1447.7" y="47.2" width="1.5" height="998.2"/><rect x="1447.7" y="47.2" width="444.7" height="2.2" fill="#6e6e6e"/><rect x="1891.1" y="47.2" width="1.7" height="998.2"/><rect x="1447.7" y="1043.8" width="444.7" height="1.6"/>
</g>
<g fill="#1a1a1a">
<rect x="0" y="0" width="1894" height="1"/>
<rect x="0" y="1045.9" width="1028" height="1.1"/><rect x="1028" y="1045.5" width="866" height="1.5"/>
<rect x="1892.8" y="0" width="1.2" height="1047"/>
<rect x="1028" y="0" width="1.7" height="1047"/>
</g>
</svg>
<div class="t" style="font-size:15.3px;color:#222;transform:translate(22.6px,631.6px) rotate(-90deg) scaleX(0.93)">SPL (dB)</div>
<div class="t" style="font-size:20.1px;color:#999;transform:translate(42.00px,14.20px) scaleX(0.838) rotate(0.03deg)">thomann15LB075-UW4_DA_ChL_BRla*</div>
<div class="t" style="font-size:20.1px;color:#999;transform:translate(351.00px,14.20px) scaleX(0.912) rotate(0.03deg)">- Leonard Audio -</div>
<div class="t" style="font-size:20.1px;color:#999;transform:translate(497.00px,14.20px) scaleX(0.835) rotate(0.03deg)">Transmission Line [Beta]</div>
<div class="t" style="font-size:19.1px;color:#111;transform:translate(22.07px,55.20px) scaleX(0.926) rotate(0.03deg)">File</div>
<div class="t" style="font-size:19.1px;color:#111;transform:translate(77.80px,55.20px) scaleX(0.899) rotate(0.03deg)">Edit</div>
<div class="t" style="font-size:19.1px;color:#111;transform:translate(137.40px,55.20px) scaleX(0.936) rotate(0.03deg)">Tools</div>
<div class="t" style="font-size:19.1px;color:#111;transform:translate(207.30px,55.20px) scaleX(0.972) rotate(0.03deg)">Window</div>
<div class="t" style="font-size:19.1px;color:#111;transform:translate(301.24px,55.20px) scaleX(0.961) rotate(0.03deg)">Help</div>
<div class="t" style="font-size:18.5px;color:#111;transform:translate(34.15px,127.90px) scaleX(0.854) rotate(0.03deg)">Infinite Baffle</div>
<div class="t" style="font-size:18.5px;color:#111;transform:translate(173.94px,127.90px) scaleX(0.855) rotate(0.03deg)">Driver</div>
<div class="t" style="font-size:18.5px;color:#111;transform:translate(265.20px,127.90px) scaleX(0.829) rotate(0.03deg)">Terminus</div>
<div class="t" style="font-size:18.5px;color:#111;transform:translate(377.10px,127.90px) scaleX(0.808) rotate(0.03deg)">System</div>
<div class="t" style="font-size:18.5px;color:#111;transform:translate(12.00px,165.50px) scaleX(0.842) rotate(0.03deg)">SPL</div>
<div class="t" style="font-size:18.5px;color:#111;transform:translate(74.15px,168.00px) scaleX(0.852) rotate(0.03deg)">Phase</div>
<div class="t" style="font-size:18.5px;color:#111;transform:translate(137.24px,168.00px) scaleX(0.863) rotate(0.03deg)">Impedance</div>
<div class="t" style="font-size:18.5px;color:#111;transform:translate(235.15px,168.00px) scaleX(0.849) rotate(0.03deg)">Displacement</div>
<div class="t" style="font-size:18.5px;color:#111;transform:translate(349.70px,168.00px) scaleX(0.843) rotate(0.03deg)">Velocity</div>
<div class="t" style="font-size:18.5px;color:#111;transform:translate(422.60px,168.00px) scaleX(0.845) rotate(0.03deg)">Group Delay</div>
<div class="t" style="font-size:21.1px;color:#111;font-weight:bold;transform:translate(413.00px,206.00px) scaleX(0.893) rotate(0.03deg)">Sound Pressure Level</div>
<div class="t" style="font-size:14.9px;color:#222;transform:translate(94.31px,233.60px) scaleX(1.093) rotate(0.03deg)">Infinite Baffle</div>
<div class="t" style="font-size:14.9px;color:#222;transform:translate(200.72px,233.60px) scaleX(1.076) rotate(0.03deg)">Driver</div>
<div class="t" style="font-size:14.9px;color:#222;transform:translate(257.20px,233.60px) scaleX(1.062) rotate(0.03deg)">Terminus</div>
<div class="t" style="font-size:14.9px;color:#222;transform:translate(334.70px,233.60px) scaleX(1.013) rotate(0.03deg)">System</div>
<div class="t" style="font-size:15.7px;color:#929292;transform:translate(55.67px,258.40px) scaleX(1.025) rotate(0.03deg)">110</div>
<div class="t" style="font-size:15.7px;color:#929292;transform:translate(55.72px,324.10px) scaleX(0.978) rotate(0.03deg)">105</div>
<div class="t" style="font-size:15.7px;color:#929292;transform:translate(55.72px,390.10px) scaleX(0.978) rotate(0.03deg)">100</div>
<div class="t" style="font-size:15.7px;color:#929292;transform:translate(65.00px,455.00px) scaleX(0.937) rotate(0.03deg)">95</div>
<div class="t" style="font-size:15.7px;color:#929292;transform:translate(65.00px,520.90px) scaleX(0.937) rotate(0.03deg)">90</div>
<div class="t" style="font-size:15.7px;color:#929292;transform:translate(65.00px,587.00px) scaleX(0.937) rotate(0.03deg)">85</div>
<div class="t" style="font-size:15.7px;color:#929292;transform:translate(65.00px,652.90px) scaleX(0.937) rotate(0.03deg)">80</div>
<div class="t" style="font-size:15.7px;color:#929292;transform:translate(65.00px,719.00px) scaleX(0.937) rotate(0.03deg)">75</div>
<div class="t" style="font-size:15.7px;color:#929292;transform:translate(65.00px,783.20px) scaleX(0.937) rotate(0.03deg)">70</div>
<div class="t" style="font-size:15.7px;color:#929292;transform:translate(65.00px,849.30px) scaleX(0.937) rotate(0.03deg)">65</div>
<div class="t" style="font-size:15.7px;color:#929292;transform:translate(65.00px,915.20px) scaleX(0.937) rotate(0.03deg)">60</div>
<div class="t" style="font-size:15.7px;color:#929292;transform:translate(82.41px,933.80px) scaleX(0.993) rotate(0.03deg)">10</div>
<div class="t" style="font-size:15.7px;color:#929292;transform:translate(455.40px,933.80px) scaleX(0.937) rotate(0.03deg)">50</div>
<div class="t" style="font-size:15.7px;color:#929292;transform:translate(610.87px,933.80px) scaleX(0.978) rotate(0.03deg)">100</div>
<div class="t" style="font-size:15.7px;color:#929292;transform:translate(983.75px,933.80px) scaleX(0.941) rotate(0.03deg)">500</div>
<div class="t" style="font-size:15.5px;color:#222;transform:translate(491.84px,956.20px) scaleX(0.964) rotate(0.03deg)">Frequency (Hz)</div>
<div class="t" style="font-size:18.2px;color:#111;transform:translate(158.68px,1021.50px) scaleX(0.917) rotate(0.03deg)">Freq: 46,8 Hz</div>
<div class="t" style="font-size:18.2px;color:#111;transform:translate(273.00px,1021.50px) scaleX(0.980) rotate(0.03deg)">Value: [Infinite Baffle = 91,0]</div>
<div class="t" style="font-size:18.2px;color:#111;transform:translate(502.02px,1021.50px) scaleX(0.979) rotate(0.03deg)">[Driver = 69,5]</div>
<div class="t" style="font-size:18.2px;color:#111;transform:translate(622.21px,1021.50px) scaleX(0.989) rotate(0.03deg)">[Terminus = 96,6]</div>
<div class="t" style="font-size:18.2px;color:#111;transform:translate(769.14px,1021.50px) scaleX(0.963) rotate(0.03deg)">[System = 96,5]</div>
<div class="t" style="font-size:19.1px;color:#000;transform:translate(1041.12px,15.20px) scaleX(0.884) rotate(0.03deg)">Enclosure</div>
<div class="t" style="font-size:18.7px;color:#111;transform:translate(1116.07px,57.40px) scaleX(0.930) rotate(0.03deg)">Front</div>
<div class="t" style="font-size:18.7px;color:#111;transform:translate(1173.93px,57.40px) scaleX(0.871) rotate(0.03deg)">Rear</div>
<div class="t" style="font-size:18.7px;color:#111;transform:translate(1234.80px,57.40px) scaleX(0.907) rotate(0.03deg)">Wizard</div>
<div class="t" style="font-size:17.5px;color:#333;transform:translate(1426.00px,542.00px) scaleX(0.950) rotate(0.03deg)">&gt;</div>
<div class="t" style="font-size:18.0px;color:#000;font-weight:bold;transform:translate(1477.38px,57.50px) scaleX(1.015) rotate(0.03deg)">Element: Rear.0</div>
<div class="t" style="font-size:18.0px;color:#000;font-weight:bold;transform:translate(1477.38px,421.00px) scaleX(1.025) rotate(0.03deg)">Model Info - Rear</div>
<div class="t" style="font-size:18.0px;color:#000;font-weight:bold;transform:translate(1477.41px,619.00px) scaleX(0.991) rotate(0.03deg)">Model Info - Front</div>
<div class="t" style="font-size:18.5px;color:#111;transform:translate(1453.90px,90.10px) scaleX(0.823) rotate(0.03deg)">Start Area</div>
<div class="t" style="font-size:18.5px;color:#111;transform:translate(1453.06px,123.03px) scaleX(0.838) rotate(0.03deg)">End Area</div>
<div class="t" style="font-size:18.5px;color:#111;transform:translate(1453.90px,155.96px) scaleX(0.875) rotate(0.03deg)">Taper Ratio</div>
<div class="t" style="font-size:18.5px;color:#111;transform:translate(1453.90px,188.89px) scaleX(0.883) rotate(0.03deg)">Taper Type</div>
<div class="t" style="font-size:18.5px;color:#111;transform:translate(1453.04px,221.82px) scaleX(0.862) rotate(0.03deg)">Hyp-Exp T</div>
<div class="t" style="font-size:18.5px;color:#111;transform:translate(1453.03px,254.75px) scaleX(0.870) rotate(0.03deg)">Length</div>
<div class="t" style="font-size:18.5px;color:#111;transform:translate(1453.90px,287.68px) scaleX(0.827) rotate(0.03deg)">Angle</div>
<div class="t" style="font-size:18.5px;color:#111;transform:translate(1453.07px,320.61px) scaleX(0.834) rotate(0.03deg)">Boundary</div>
<div class="t" style="font-size:18.5px;color:#111;transform:translate(1453.90px,353.54px) scaleX(0.844) rotate(0.03deg)">Stuffing</div>
<div class="t" style="font-size:18.5px;color:#111;transform:translate(1453.90px,386.47px) scaleX(0.832) rotate(0.03deg)">Volume</div>
<div class="t" style="font-size:18.5px;color:#111;transform:translate(1453.02px,453.20px) scaleX(0.876) rotate(0.03deg)">Depth</div>
<div class="t" style="font-size:18.5px;color:#111;transform:translate(1453.90px,486.00px) scaleX(0.832) rotate(0.03deg)">Volume</div>
<div class="t" style="font-size:18.5px;color:#111;transform:translate(1453.03px,518.80px) scaleX(0.870) rotate(0.03deg)">Length</div>
<div class="t" style="font-size:18.5px;color:#111;transform:translate(1453.90px,551.00px) scaleX(0.896) rotate(0.03deg)">Tap Pos.</div>
<div class="t" style="font-size:18.5px;color:#111;transform:translate(1453.04px,584.30px) scaleX(0.861) rotate(0.03deg)">Driver Pos.</div>
<div class="t" style="font-size:18.5px;color:#111;transform:translate(1453.90px,651.00px) scaleX(0.832) rotate(0.03deg)">Volume</div>
<div class="t" style="font-size:18.5px;color:#111;transform:translate(1453.03px,683.80px) scaleX(0.870) rotate(0.03deg)">Length</div>
<div class="t" style="font-size:18.5px;color:#111;transform:translate(1548.02px,87.40px) scaleX(0.875) rotate(0.03deg)">1800</div>
<div class="t" style="font-size:18.5px;color:#111;transform:translate(1548.02px,120.33px) scaleX(0.875) rotate(0.03deg)">1800</div>
<div class="t" style="font-size:18.5px;color:#a0a0a0;transform:translate(1549.04px,153.26px) scaleX(0.860) rotate(0.03deg)">1</div>
<div class="t" style="font-size:18.5px;color:#111;transform:translate(1548.06px,185.89px) scaleX(0.845) rotate(0.03deg)">Parabolic</div>
<div class="t" style="font-size:18.5px;color:#111;transform:translate(1548.90px,252.05px) scaleX(0.843) rotate(0.03deg)">42</div>
<div class="t" style="font-size:18.5px;color:#111;transform:translate(1548.90px,284.98px) scaleX(0.860) rotate(0.03deg)">0</div>
<div class="t" style="font-size:18.5px;color:#a0a0a0;transform:translate(1571.60px,317.41px) scaleX(0.845) rotate(0.03deg)">Open</div>
<div class="t" style="font-size:18.5px;color:#111;transform:translate(1549.04px,350.84px) scaleX(0.860) rotate(0.03deg)">1</div>
<div class="t" style="font-size:18.5px;color:#111;transform:translate(1548.90px,386.47px) scaleX(0.837) rotate(0.03deg)">75,6</div>
<div class="t" style="font-size:18.5px;color:#111;transform:translate(1548.90px,450.00px) scaleX(0.843) rotate(0.03deg)">42</div>
<div class="t" style="font-size:18.5px;color:#111;transform:translate(1548.90px,485.60px) scaleX(0.837) rotate(0.03deg)">82,5</div>
<div class="t" style="font-size:18.5px;color:#111;transform:translate(1548.90px,518.40px) scaleX(0.843) rotate(0.03deg)">72</div>
<div class="t" style="font-size:18.5px;color:#909090;transform:translate(1548.90px,549.20px) scaleX(0.843) rotate(0.03deg)">72</div>
<div class="t" style="font-size:18.5px;color:#111;transform:translate(1548.90px,582.00px) scaleX(0.878) rotate(0.03deg)">21,1390145411809</div>
<div class="t" style="font-size:18.5px;color:#111;transform:translate(1548.90px,651.00px) scaleX(0.860) rotate(0.03deg)">0</div>
<div class="t" style="font-size:18.5px;color:#111;transform:translate(1548.90px,683.80px) scaleX(0.860) rotate(0.03deg)">0</div>
<div class="t" style="font-size:18.5px;color:#111;transform:translate(1851.80px,90.10px) scaleX(0.897) rotate(0.03deg)">cm²</div>
<div class="t" style="font-size:18.5px;color:#111;transform:translate(1851.80px,123.03px) scaleX(0.897) rotate(0.03deg)">cm²</div>
<div class="t" style="font-size:18.5px;color:#111;transform:translate(1851.80px,254.75px) scaleX(0.833) rotate(0.03deg)">cm</div>
<div class="t" style="font-size:18.5px;color:#111;transform:translate(1852.11px,287.68px) scaleX(0.888) rotate(0.03deg)">Deg</div>
<div class="t" style="font-size:18.5px;color:#111;transform:translate(1850.22px,354.24px) scaleX(0.977) rotate(0.03deg)">kg/m</div>
<div class="t" style="font-size:18.5px;color:#111;transform:translate(1853.14px,386.47px) scaleX(0.860) rotate(0.03deg)">l</div>
<div class="t" style="font-size:18.5px;color:#111;transform:translate(1851.80px,452.80px) scaleX(0.833) rotate(0.03deg)">cm</div>
<div class="t" style="font-size:18.5px;color:#111;transform:translate(1853.14px,485.80px) scaleX(0.860) rotate(0.03deg)">l</div>
<div class="t" style="font-size:18.5px;color:#111;transform:translate(1851.80px,518.60px) scaleX(0.833) rotate(0.03deg)">cm</div>
<div class="t" style="font-size:18.5px;color:#111;transform:translate(1851.80px,551.40px) scaleX(0.833) rotate(0.03deg)">cm</div>
<div class="t" style="font-size:18.5px;color:#111;transform:translate(1851.80px,584.80px) scaleX(0.833) rotate(0.03deg)">cm</div>
<div class="t" style="font-size:18.5px;color:#111;transform:translate(1853.14px,651.00px) scaleX(0.860) rotate(0.03deg)">l</div>
<div class="t" style="font-size:18.5px;color:#111;transform:translate(1851.80px,683.80px) scaleX(0.833) rotate(0.03deg)">cm</div>
</body></html>
